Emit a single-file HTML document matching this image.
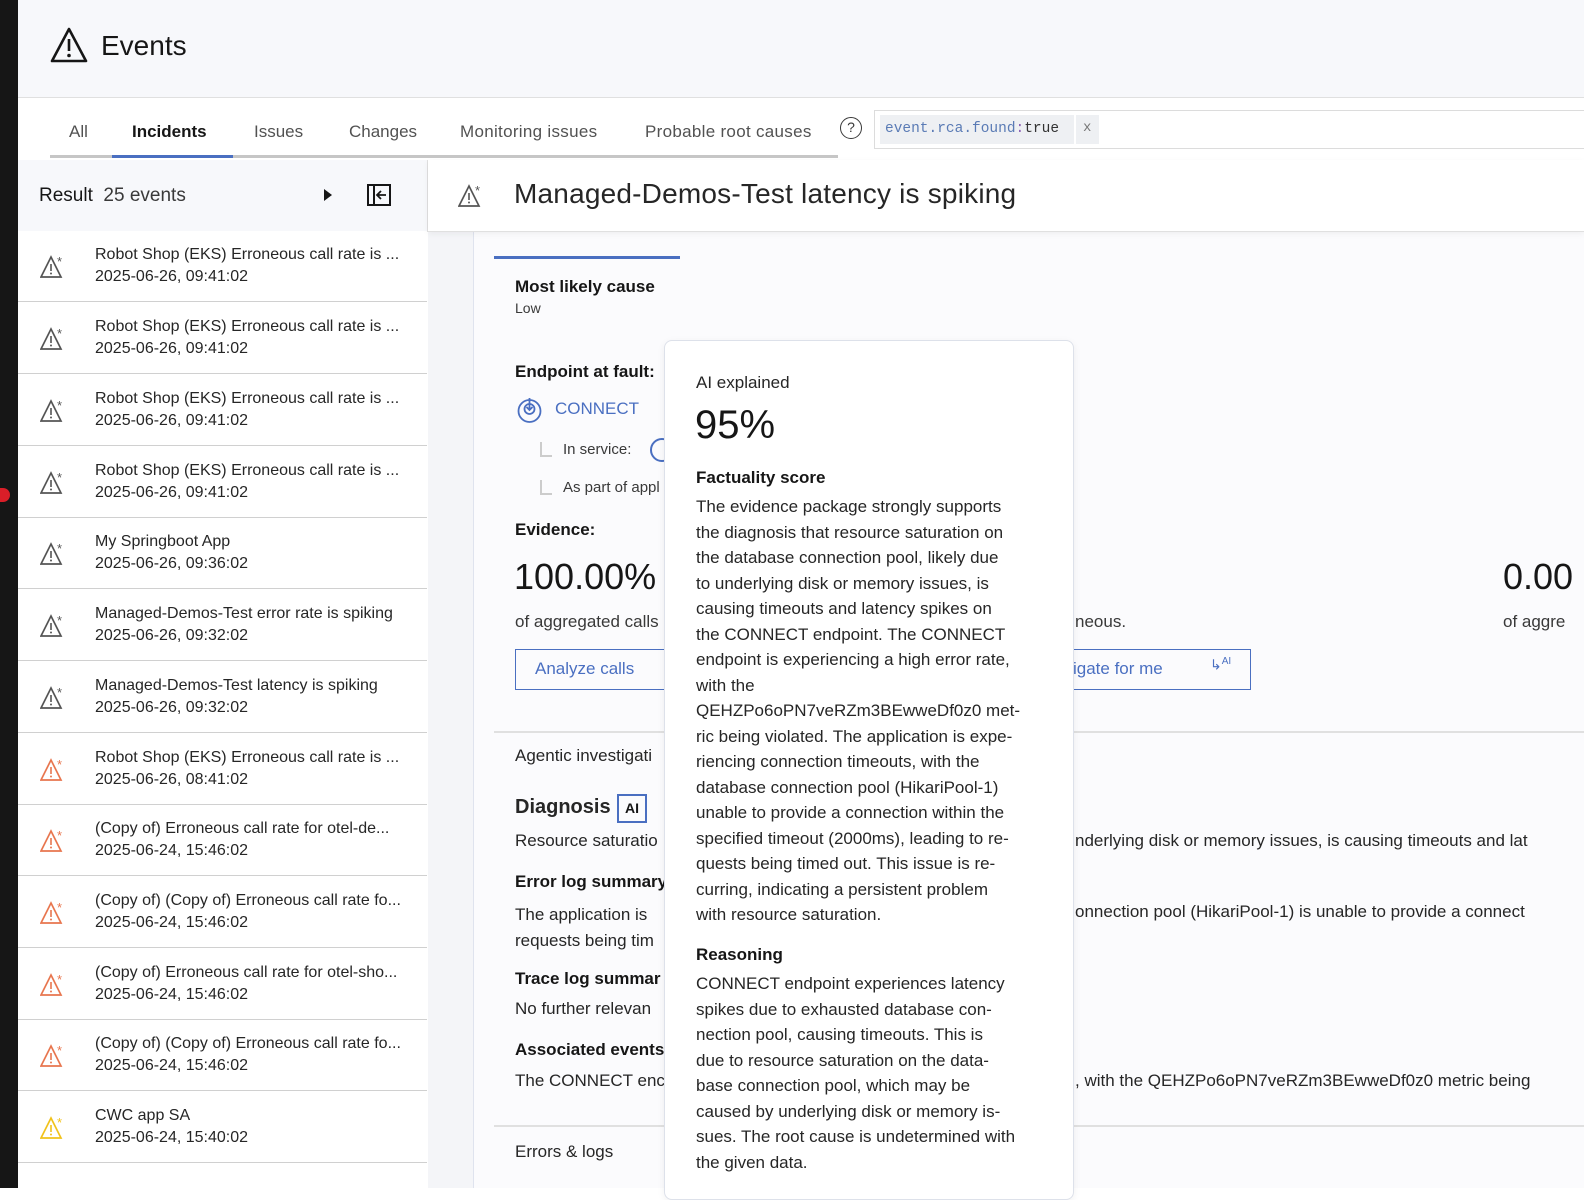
<!DOCTYPE html>
<html><head><meta charset="utf-8"><style>
*{box-sizing:border-box;margin:0;padding:0}
body{width:1584px;height:1188px;overflow:hidden;background:#fff;font-family:"Liberation Sans",sans-serif;color:#161616;position:relative}
.a{position:absolute;white-space:nowrap}
.row{position:absolute;left:18px;width:409px;height:71px;border-bottom:1px solid #d0d0d0;background:#fff}
.row svg{position:absolute;left:22px;top:22px}
.row .t{position:absolute;left:77px;top:13px;font-size:16px;line-height:22px;color:#262626}
.pop p{font-size:17px;line-height:25.5px;color:#262626}
</style></head><body>
<div class="a" style="left:0;top:0;width:18px;height:1188px;background:#161616"></div>
<div class="a" style="left:0;top:488px;width:10px;height:14px;background:#da1e28;border-radius:0 7px 7px 0"></div>
<div class="a" style="left:18px;top:0;width:1566px;height:98px;background:#f7f8fb;border-bottom:1px solid #e0e0e0"></div>
<svg class="a" style="left:50px;top:27px" width="38" height="36" viewBox="0 0 38 36"><path d="M19 2 L36 34 H2 Z" fill="none" stroke="#161616" stroke-width="2.6" stroke-linejoin="round"/><rect x="17.7" y="12" width="2.6" height="12" fill="#161616"/><circle cx="19" cy="28.5" r="1.8" fill="#161616"/></svg>
<div class="a" style="left:101px;top:30px;font-size:28px;color:#161616">Events</div>
<div class="a" style="left:50px;top:155px;width:788px;height:3px;background:#c6c6c6"></div>
<div class="a" style="left:112px;top:155px;width:121px;height:3px;background:#4a6fc1"></div>
<div class="a" style="left:69px;top:122px;font-size:17px;color:#525252">All</div>
<div class="a" style="left:132px;top:122px;font-size:17px;font-weight:bold;color:#161616">Incidents</div>
<div class="a" style="left:254px;top:122px;font-size:17px;color:#525252">Issues</div>
<div class="a" style="left:349px;top:122px;font-size:17px;color:#525252">Changes</div>
<div class="a" style="left:460px;top:122px;font-size:17px;color:#525252;letter-spacing:0.3px">Monitoring issues</div>
<div class="a" style="left:645px;top:122px;font-size:17px;color:#525252;letter-spacing:0.3px">Probable root causes</div>
<div class="a" style="left:840px;top:117px;width:22px;height:22px;border:1.6px solid #393939;border-radius:50%;font-size:14px;text-align:center;line-height:19px;color:#393939">?</div>
<div class="a" style="left:874px;top:110px;width:720px;height:39px;border:1px solid #dcdcdc;background:#fff"></div>
<div class="a" style="left:880px;top:115px;height:29px;background:#eef0f3;width:194px"></div>
<div class="a" style="left:1076px;top:115px;width:23px;height:29px;background:#eef0f3"></div>
<div class="a" style="left:885px;top:121px;font-family:'Liberation Mono',monospace;font-size:14.5px;color:#5a7bb5">event.rca.found<span style="color:#8a5fb5">:</span><span style="color:#333">true</span></div>
<div class="a" style="left:1083px;top:120px;font-family:'Liberation Mono',monospace;font-size:14px;color:#777">x</div>
<div class="a" style="left:18px;top:160px;width:409px;height:71px;background:#f7f8fb"></div>
<div class="a" style="left:39px;top:185px;font-size:19px;color:#161616">Result&nbsp; <span style="color:#393939">25 events</span></div>
<svg class="a" style="left:323px;top:188px" width="10" height="14"><path d="M1 1 L9 7 L1 13Z" fill="#161616"/></svg>
<svg class="a" style="left:367px;top:184px" width="24" height="22" viewBox="0 0 24 22"><rect x="1" y="1" width="22" height="20" fill="none" stroke="#161616" stroke-width="2"/><line x1="7" y1="1" x2="7" y2="21" stroke="#161616" stroke-width="2"/><path d="M19 11 H11 M14 7 L10 11 L14 15" fill="none" stroke="#161616" stroke-width="1.8"/></svg>
<div class="a" style="left:427px;top:160px;width:1px;height:72px;background:#e0e0e0"></div>

<div class="row" style="top:231px"><svg width="28" height="28" viewBox="0 0 28 28"><path d="M11 4 L21 24 H1 Z" fill="none" stroke="#555" stroke-width="1.7"/><rect x="10.2" y="11" width="1.6" height="7" fill="#555"/><circle cx="11" cy="20.5" r="1" fill="#555"/><text x="17" y="13" font-size="13" fill="#555" font-family="Liberation Sans">*</text></svg><div class="t">Robot Shop (EKS) Erroneous call rate is ...<br>2025-06-26, 09:41:02</div></div>
<div class="row" style="top:303px"><svg width="28" height="28" viewBox="0 0 28 28"><path d="M11 4 L21 24 H1 Z" fill="none" stroke="#555" stroke-width="1.7"/><rect x="10.2" y="11" width="1.6" height="7" fill="#555"/><circle cx="11" cy="20.5" r="1" fill="#555"/><text x="17" y="13" font-size="13" fill="#555" font-family="Liberation Sans">*</text></svg><div class="t">Robot Shop (EKS) Erroneous call rate is ...<br>2025-06-26, 09:41:02</div></div>
<div class="row" style="top:375px"><svg width="28" height="28" viewBox="0 0 28 28"><path d="M11 4 L21 24 H1 Z" fill="none" stroke="#555" stroke-width="1.7"/><rect x="10.2" y="11" width="1.6" height="7" fill="#555"/><circle cx="11" cy="20.5" r="1" fill="#555"/><text x="17" y="13" font-size="13" fill="#555" font-family="Liberation Sans">*</text></svg><div class="t">Robot Shop (EKS) Erroneous call rate is ...<br>2025-06-26, 09:41:02</div></div>
<div class="row" style="top:447px"><svg width="28" height="28" viewBox="0 0 28 28"><path d="M11 4 L21 24 H1 Z" fill="none" stroke="#555" stroke-width="1.7"/><rect x="10.2" y="11" width="1.6" height="7" fill="#555"/><circle cx="11" cy="20.5" r="1" fill="#555"/><text x="17" y="13" font-size="13" fill="#555" font-family="Liberation Sans">*</text></svg><div class="t">Robot Shop (EKS) Erroneous call rate is ...<br>2025-06-26, 09:41:02</div></div>
<div class="row" style="top:518px"><svg width="28" height="28" viewBox="0 0 28 28"><path d="M11 4 L21 24 H1 Z" fill="none" stroke="#555" stroke-width="1.7"/><rect x="10.2" y="11" width="1.6" height="7" fill="#555"/><circle cx="11" cy="20.5" r="1" fill="#555"/><text x="17" y="13" font-size="13" fill="#555" font-family="Liberation Sans">*</text></svg><div class="t">My Springboot App<br>2025-06-26, 09:36:02</div></div>
<div class="row" style="top:590px"><svg width="28" height="28" viewBox="0 0 28 28"><path d="M11 4 L21 24 H1 Z" fill="none" stroke="#555" stroke-width="1.7"/><rect x="10.2" y="11" width="1.6" height="7" fill="#555"/><circle cx="11" cy="20.5" r="1" fill="#555"/><text x="17" y="13" font-size="13" fill="#555" font-family="Liberation Sans">*</text></svg><div class="t">Managed-Demos-Test error rate is spiking<br>2025-06-26, 09:32:02</div></div>
<div class="row" style="top:662px"><svg width="28" height="28" viewBox="0 0 28 28"><path d="M11 4 L21 24 H1 Z" fill="none" stroke="#555" stroke-width="1.7"/><rect x="10.2" y="11" width="1.6" height="7" fill="#555"/><circle cx="11" cy="20.5" r="1" fill="#555"/><text x="17" y="13" font-size="13" fill="#555" font-family="Liberation Sans">*</text></svg><div class="t">Managed-Demos-Test latency is spiking<br>2025-06-26, 09:32:02</div></div>
<div class="row" style="top:734px"><svg width="28" height="28" viewBox="0 0 28 28"><path d="M11 4 L21 24 H1 Z" fill="none" stroke="#e8764f" stroke-width="1.7"/><rect x="10.2" y="11" width="1.6" height="7" fill="#e8764f"/><circle cx="11" cy="20.5" r="1" fill="#e8764f"/><text x="17" y="13" font-size="13" fill="#e8764f" font-family="Liberation Sans">*</text></svg><div class="t">Robot Shop (EKS) Erroneous call rate is ...<br>2025-06-26, 08:41:02</div></div>
<div class="row" style="top:805px"><svg width="28" height="28" viewBox="0 0 28 28"><path d="M11 4 L21 24 H1 Z" fill="none" stroke="#e8764f" stroke-width="1.7"/><rect x="10.2" y="11" width="1.6" height="7" fill="#e8764f"/><circle cx="11" cy="20.5" r="1" fill="#e8764f"/><text x="17" y="13" font-size="13" fill="#e8764f" font-family="Liberation Sans">*</text></svg><div class="t">(Copy of) Erroneous call rate for otel-de...<br>2025-06-24, 15:46:02</div></div>
<div class="row" style="top:877px"><svg width="28" height="28" viewBox="0 0 28 28"><path d="M11 4 L21 24 H1 Z" fill="none" stroke="#e8764f" stroke-width="1.7"/><rect x="10.2" y="11" width="1.6" height="7" fill="#e8764f"/><circle cx="11" cy="20.5" r="1" fill="#e8764f"/><text x="17" y="13" font-size="13" fill="#e8764f" font-family="Liberation Sans">*</text></svg><div class="t">(Copy of) (Copy of) Erroneous call rate fo...<br>2025-06-24, 15:46:02</div></div>
<div class="row" style="top:949px"><svg width="28" height="28" viewBox="0 0 28 28"><path d="M11 4 L21 24 H1 Z" fill="none" stroke="#e8764f" stroke-width="1.7"/><rect x="10.2" y="11" width="1.6" height="7" fill="#e8764f"/><circle cx="11" cy="20.5" r="1" fill="#e8764f"/><text x="17" y="13" font-size="13" fill="#e8764f" font-family="Liberation Sans">*</text></svg><div class="t">(Copy of) Erroneous call rate for otel-sho...<br>2025-06-24, 15:46:02</div></div>
<div class="row" style="top:1020px"><svg width="28" height="28" viewBox="0 0 28 28"><path d="M11 4 L21 24 H1 Z" fill="none" stroke="#e8764f" stroke-width="1.7"/><rect x="10.2" y="11" width="1.6" height="7" fill="#e8764f"/><circle cx="11" cy="20.5" r="1" fill="#e8764f"/><text x="17" y="13" font-size="13" fill="#e8764f" font-family="Liberation Sans">*</text></svg><div class="t">(Copy of) (Copy of) Erroneous call rate fo...<br>2025-06-24, 15:46:02</div></div>
<div class="row" style="top:1092px"><svg width="28" height="28" viewBox="0 0 28 28"><path d="M11 4 L21 24 H1 Z" fill="none" stroke="#f1c21b" stroke-width="1.7"/><rect x="10.2" y="11" width="1.6" height="7" fill="#f1c21b"/><circle cx="11" cy="20.5" r="1" fill="#f1c21b"/><text x="17" y="13" font-size="13" fill="#f1c21b" font-family="Liberation Sans">*</text></svg><div class="t">CWC app SA<br>2025-06-24, 15:40:02</div></div>

<div class="a" style="left:428px;top:231px;width:1156px;height:957px;background:#f4f5f8"></div>
<div class="a" style="left:473px;top:231px;width:1111px;height:957px;background:#fbfbfd;border-left:1.5px solid #dfe3ee"></div>
<div class="a" style="left:428px;top:160px;width:1156px;height:72px;background:#fff;border-bottom:1px solid #e0e0e0;box-shadow:0 2px 6px rgba(0,0,0,.05)"></div>
<svg class="a" style="left:458px;top:182px" width="28" height="28" viewBox="0 0 28 28"><path d="M11 4 L21 24 H1 Z" fill="none" stroke="#555" stroke-width="1.7"/><rect x="10.2" y="11" width="1.6" height="7" fill="#555"/><circle cx="11" cy="20.5" r="1" fill="#555"/><text x="17" y="13" font-size="13" fill="#555" font-family="Liberation Sans">*</text></svg>
<div class="a" style="left:514px;top:178px;font-size:28px;color:#262626;letter-spacing:0.2px">Managed-Demos-Test latency is spiking</div>

<div class="a" style="left:494px;top:256px;width:186px;height:3px;background:#4a6fc1"></div>
<div class="a" style="left:515px;top:277px;font-size:17px;font-weight:bold">Most likely cause</div>
<div class="a" style="left:515px;top:300px;font-size:14px;color:#393939">Low</div>
<div class="a" style="left:515px;top:362px;font-size:17px;font-weight:bold">Endpoint at fault:</div>
<svg class="a" style="left:516px;top:396px" width="27" height="27" viewBox="0 0 27 27"><circle cx="13.5" cy="15" r="11" fill="none" stroke="#4a6fc1" stroke-width="1.8"/><circle cx="13.5" cy="13" r="5" fill="none" stroke="#4a6fc1" stroke-width="1.8"/><path d="M13.5 2 V14 M10.5 11 L13.5 14 L16.5 11" fill="none" stroke="#4a6fc1" stroke-width="1.8"/></svg>
<div class="a" style="left:555px;top:399px;font-size:17px;color:#4a6fc1">CONNECT</div>
<div class="a" style="left:540px;top:442px;width:12px;height:15px;border-left:2px solid #ccc;border-bottom:2px solid #ccc"></div>
<div class="a" style="left:563px;top:441px;font-size:15px;color:#393939">In service:</div>
<div class="a" style="left:650px;top:438px;width:24px;height:24px;border:2px solid #4a6fc1;border-radius:50%"></div>
<div class="a" style="left:540px;top:480px;width:12px;height:15px;border-left:2px solid #ccc;border-bottom:2px solid #ccc"></div>
<div class="a" style="left:563px;top:479px;font-size:15px;color:#393939">As part of appl</div>
<div class="a" style="left:515px;top:520px;font-size:17px;font-weight:bold">Evidence:</div>
<div class="a" style="left:514px;top:556px;font-size:36px;color:#161616">100.00%</div>
<div class="a" style="left:515px;top:612px;font-size:17px;color:#393939">of aggregated calls</div>
<div class="a" style="left:515px;top:649px;width:160px;height:41px;border:1.5px solid #4a6fc1"></div>
<div class="a" style="left:535px;top:659px;font-size:17px;color:#4a6fc1">Analyze calls</div>
<div class="a" style="left:1060px;top:649px;width:191px;height:41px;border:1.5px solid #4a6fc1;border-left:none"></div>
<div class="a" style="left:1073px;top:659px;font-size:17px;color:#4a6fc1">igate for me</div>
<div class="a" style="left:1210px;top:656px;font-size:14px;color:#4a6fc1">↳<sup style="font-size:10px">AI</sup></div>
<div class="a" style="left:1075px;top:612px;font-size:17px;color:#393939">neous.</div>
<div class="a" style="left:1503px;top:556px;font-size:36px;color:#161616">0.00</div>
<div class="a" style="left:1503px;top:612px;font-size:17px;color:#393939">of aggre</div>
<div class="a" style="left:494px;top:731px;width:1090px;height:1.5px;background:#e0e0e0"></div>
<div class="a" style="left:515px;top:746px;font-size:17px;color:#262626">Agentic investigati</div>
<div class="a" style="left:515px;top:796px;font-size:20px;font-weight:bold;color:#262626">Diagnosis</div>
<div class="a" style="left:617px;top:794px;width:30px;height:29px;border:2px solid #4a6fc1;font-size:14px;font-weight:bold;text-align:center;line-height:25px">AI</div>
<div class="a" style="left:515px;top:831px;font-size:17px;color:#262626">Resource saturatio</div>
<div class="a" style="left:1075px;top:831px;font-size:17px;color:#262626">nderlying disk or memory issues, is causing timeouts and lat</div>
<div class="a" style="left:515px;top:872px;font-size:17px;font-weight:bold">Error log summary</div>
<div class="a" style="left:515px;top:902px;font-size:17px;line-height:26px;color:#262626">The application is<br>requests being tim</div>
<div class="a" style="left:1075px;top:902px;font-size:17px;color:#262626">onnection pool (HikariPool-1) is unable to provide a connect</div>
<div class="a" style="left:515px;top:969px;font-size:17px;font-weight:bold">Trace log summar</div>
<div class="a" style="left:515px;top:999px;font-size:17px;color:#262626">No further relevan</div>
<div class="a" style="left:515px;top:1040px;font-size:17px;font-weight:bold">Associated events</div>
<div class="a" style="left:515px;top:1071px;font-size:17px;color:#262626">The CONNECT enc</div>
<div class="a" style="left:1075px;top:1071px;font-size:17px;color:#262626">, with the QEHZPo6oPN7veRZm3BEwweDf0z0 metric being</div>
<div class="a" style="left:494px;top:1125px;width:1090px;height:1.5px;background:#e0e0e0"></div>
<div class="a" style="left:515px;top:1142px;font-size:17px;color:#262626">Errors &amp; logs</div>

<div class="a pop" style="left:664px;top:340px;width:410px;height:860px;background:#fff;border:1px solid #dde1ea;border-radius:8px;box-shadow:0 2px 8px rgba(0,0,0,.06)">
<div class="a" style="left:31px;top:32px;font-size:17px;color:#262626">AI explained</div>
<div class="a" style="left:30px;top:62px;font-size:40px;color:#161616">95%</div>
<div class="a" style="left:31px;top:127px;font-size:17px;font-weight:bold">Factuality score</div>
<p class="a" style="left:31px;top:153px">The evidence package strongly supports<br>the diagnosis that resource saturation on<br>the database connection pool, likely due<br>to underlying disk or memory issues, is<br>causing timeouts and latency spikes on<br>the CONNECT endpoint. The CONNECT<br>endpoint is experiencing a high error rate,<br>with the<br>QEHZPo6oPN7veRZm3BEwweDf0z0 met-<br>ric being violated. The application is expe-<br>riencing connection timeouts, with the<br>database connection pool (HikariPool-1)<br>unable to provide a connection within the<br>specified timeout (2000ms), leading to re-<br>quests being timed out. This issue is re-<br>curring, indicating a persistent problem<br>with resource saturation.</p>
<div class="a" style="left:31px;top:604px;font-size:17px;font-weight:bold">Reasoning</div>
<p class="a" style="left:31px;top:630px">CONNECT endpoint experiences latency<br>spikes due to exhausted database con-<br>nection pool, causing timeouts. This is<br>due to resource saturation on the data-<br>base connection pool, which may be<br>caused by underlying disk or memory is-<br>sues. The root cause is undetermined with<br>the given data.</p>
</div>
</body></html>
